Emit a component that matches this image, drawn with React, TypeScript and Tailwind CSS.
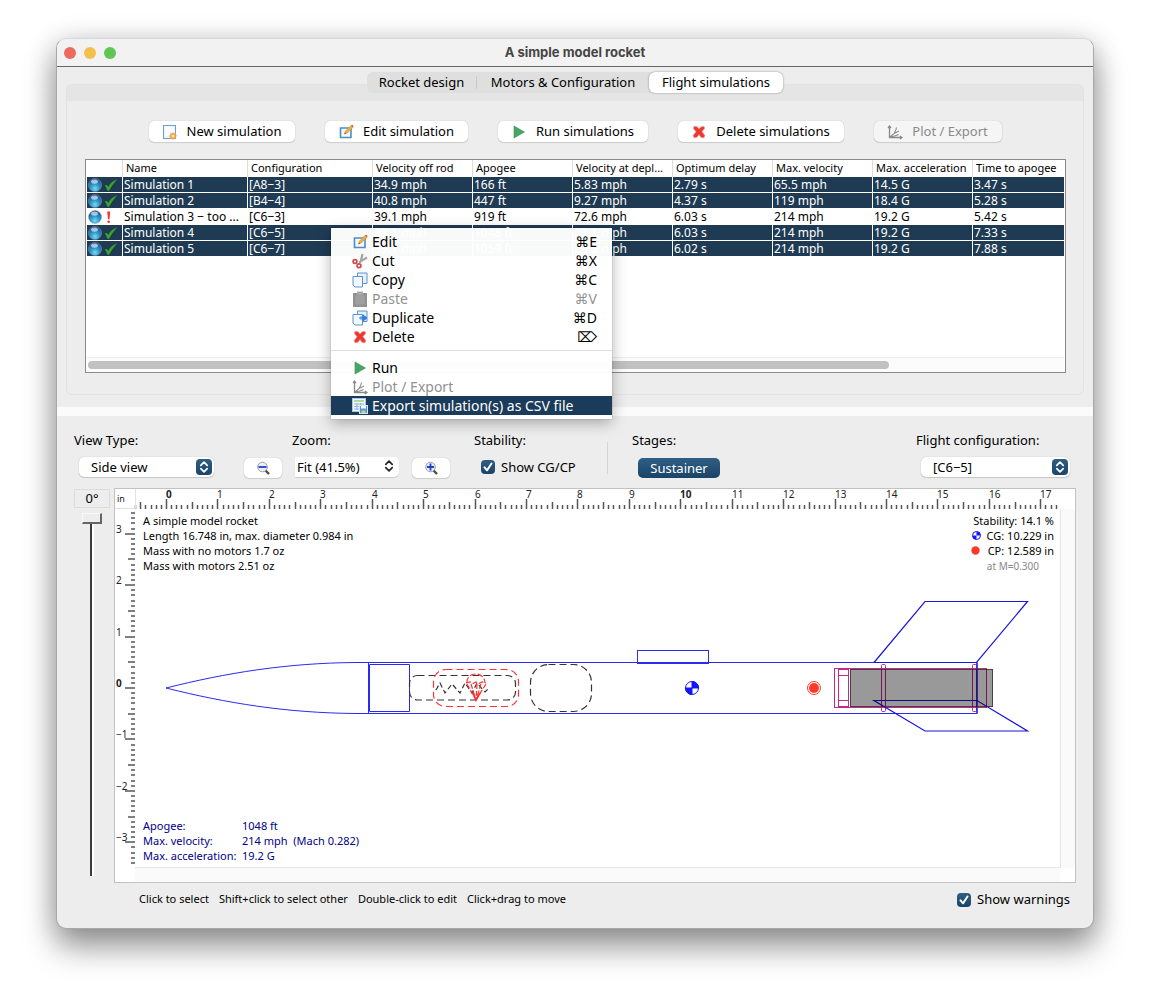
import React from "react";

const PX_PER_INCH = 51.43;

type Simulation = { name: string; ok: boolean; values: string[] };

const columns = [
  "Name",
  "Configuration",
  "Velocity off rod",
  "Apogee",
  "Velocity at depl...",
  "Optimum delay",
  "Max. velocity",
  "Max. acceleration",
  "Time to apogee",
];

const simulations: Simulation[] = [
  { name: "Simulation 1", ok: true, values: ["[A8−3]", "34.9 mph", "166 ft", "5.83 mph", "2.79 s", "65.5 mph", "14.5 G", "3.47 s"] },
  { name: "Simulation 2", ok: true, values: ["[B4−4]", "40.8 mph", "447 ft", "9.27 mph", "4.37 s", "119 mph", "18.4 G", "5.28 s"] },
  { name: "Simulation 3 − too ...", ok: false, values: ["[C6−3]", "39.1 mph", "919 ft", "72.6 mph", "6.03 s", "214 mph", "19.2 G", "5.42 s"] },
  { name: "Simulation 4", ok: true, values: ["[C6−5]", "39.1 mph", "1048 ft", "23.1 mph", "6.03 s", "214 mph", "19.2 G", "7.33 s"] },
  { name: "Simulation 5", ok: true, values: ["[C6−7]", "39.1 mph", "1059 ft", "20.5 mph", "6.02 s", "214 mph", "19.2 G", "7.88 s"] },
];

function NewIcon() {
  return (
    <svg className="h-4 w-4 shrink-0" viewBox="0 0 16 16" aria-hidden="true">
      <rect x="1.5" y="1.5" width="12" height="13" fill="#eef6fd" stroke="#6da0d0" />
      <path d="M3 3h9v9H3z" fill="#fff" opacity="0.7" />
      <path d="M11 8l1 1.6 1.8-.5-.3 1.8 1.7.9-1.5 1.1.5 1.8-1.9-.2L11 16l-1.2-1.5-1.9.3.4-1.9-1.6-1 1.7-1-.3-1.8 1.8.4z" fill="#f0a04a" />
      <circle cx="11" cy="12" r="1.6" fill="#fff0a0" />
    </svg>
  );
}

function EditIcon() {
  return (
    <svg className="h-4 w-4 shrink-0" viewBox="0 0 16 16" aria-hidden="true">
      <path d="M2.500 4h10.500v9.500H2.500z" fill="#f5f9fd" stroke="#4f8cc4" strokeWidth="1.600" />
      <path d="M6.500 10l1-3L13 1.500l2 1.800L9.300 9z" fill="#f0ad3c" stroke="#c98524" strokeWidth="0.5" />
      <path d="M13 1.500l2 1.800.5-1.200-1.300-1.300z" fill="#c9532f" />
      <path d="M6.500 10l.5-1.500 1 1z" fill="#333" />
    </svg>
  );
}

function RunIcon() {
  return (
    <svg className="h-4 w-4 shrink-0" viewBox="0 0 16 16" aria-hidden="true">
      <path d="M3 2l10.500 6L3 14z" fill="#4aa564" stroke="#3b9255" strokeWidth="0.6" />
    </svg>
  );
}

function DeleteIcon() {
  return (
    <svg className="h-4 w-4 shrink-0" viewBox="0 0 16 16" aria-hidden="true">
      <path d="M3.200 2.200l3 .6L8 5l2-2.200 3-.4.600 2L11 7.600l2.800 4-.8 2.200-3-.4L8 10.600l-2 2.600-3 .6-.800-2.200L5 7.800 2.400 4.500z" fill="#e93a32" stroke="#f4908a" strokeWidth="0.8" />
    </svg>
  );
}

function PlotIcon() {
  return (
    <svg className="h-4 w-4 shrink-0" viewBox="0 0 16 16" fill="none" stroke="#8a8a8a" aria-hidden="true">
      <path d="M2.500 2v11.500H15M1 4l1.500-2L4 4M13 12l2 1.500-2 1.500" strokeWidth="1.300" />
      <path d="M3 13C6 11 9 7 9.500 3.500M3 13c3-3 6-5 9-6M3 13c4-.5 6-1 8.500-2.500" strokeWidth="1.100" />
    </svg>
  );
}

function CutIcon() {
  return (
    <svg className="h-4 w-4 shrink-0" viewBox="0 0 16 16" fill="none" aria-hidden="true">
      <path d="M10.500 1L8.600 9M15 4.500L7 9.500" stroke="#a2a2a2" strokeWidth="2.200" />
      <path d="M15 6L9 9" stroke="#d0d0d0" />
      <circle cx="3" cy="8.500" r="1.900" stroke="#d2474a" strokeWidth="1.700" />
      <circle cx="7" cy="12.700" r="1.900" stroke="#d2474a" strokeWidth="1.700" />
    </svg>
  );
}

function CopyIcon({ arrow = false }: { arrow?: boolean }) {
  return (
    <svg className="h-4 w-4 shrink-0" viewBox="0 0 16 16" aria-hidden="true">
      <path d="M5.500 1h9.500v10.500H5.500z" fill="#e4f0fb" stroke="#5b93cb" />
      <path d="M1 4.500h9.500V15H3L1 13z" fill="#f2f8fe" stroke="#5b93cb" />
      {arrow && <path d="M7 8h4M9 6.200V9.800M11 5l4 3-4 3z" fill="#2f7bea" stroke="#2f7bea" />}
    </svg>
  );
}

function PasteIcon() {
  return (
    <svg className="h-4 w-4 shrink-0" viewBox="0 0 16 16" aria-hidden="true">
      <rect x="1" y="2" width="14" height="14" fill="#929292" />
      <rect x="3.500" y="4.500" width="9" height="9" fill="#a0a0a0" />
      <rect x="5" y="0.500" width="6" height="3.500" fill="#a9a9a9" />
    </svg>
  );
}

function CsvIcon() {
  return (
    <svg className="h-4 w-4 shrink-0" viewBox="0 0 16 16" aria-hidden="true">
      <rect x="0.500" y="0.500" width="13" height="13" fill="#f3f8ff" stroke="#a9c6ec" />
      <rect x="2" y="2" width="10" height="2" fill="#b8d98a" />
      <path d="M2 6h10M2 8.500h10M2 11h10M5 5v7M8.500 5v7" stroke="#8fb3e3" />
      <rect x="7.500" y="7.500" width="8" height="8" fill="#5d92de" stroke="#d7e6fa" />
      <rect x="9" y="8" width="5" height="2.500" fill="#fff" />
      <rect x="9.500" y="12.500" width="4" height="2.500" fill="#b8d98a" />
    </svg>
  );
}

function BallIcon() {
  return (
    <svg className="h-[14px] w-[14px] shrink-0" viewBox="0 0 14 14" aria-hidden="true">
      <defs>
        <radialGradient id="ball" cx="0.5" cy="0.78" r="0.75">
          <stop offset="0" stopColor="#6fdcf8" />
          <stop offset="0.5" stopColor="#2f8fc4" />
          <stop offset="1" stopColor="#1a4f86" />
        </radialGradient>
      </defs>
      <circle cx="7" cy="7" r="6.500" fill="url(#ball)" stroke="#7fa9c4" strokeWidth="0.5" />
      <ellipse cx="6.500" cy="3.600" rx="3.400" ry="2.200" fill="#fff" opacity="0.6" />
    </svg>
  );
}

function StateIcon({ ok }: { ok: boolean }) {
  return (
    <svg className="h-[14px] w-[14px] shrink-0" viewBox="0 0 14 14" role="img" aria-label={ok ? "Valid" : "Warning"}>
      {ok ? (
        <path d="M1 7.500c1-.8 2.300-.5 3.200 1.500C6 5.500 9 2.500 13.500 1.200 10 4.500 7.500 8 5 12.800H3.400C2.800 10.500 2 9 1 7.500z" fill="#3fa02b" />
      ) : (
        <path d="M3.200 1.500h3L5.500 9.300H4zM4.700 10.400a1.300 1.300 0 110 2.600 1.300 1.300 0 010-2.600z" fill="#f5362f" />
      )}
    </svg>
  );
}

function Magnifier({ plus }: { plus: boolean }) {
  return (
    <svg className="h-4 w-4" viewBox="0 0 16 16" fill="none" aria-hidden="true">
      <path d="M10.500 10.500l3.500 3.500" stroke="#4a4a4a" strokeWidth="2.400" />
      <circle cx="7.500" cy="7" r="4.800" fill="#e9eefb" stroke="#9aa0ab" />
      <path d={plus ? "M4 7h7M7.500 3.500v7" : "M3.500 7h8"} stroke="#1f3fc4" strokeWidth="1.800" />
    </svg>
  );
}

function UpDown({ className }: { className: string }) {
  return (
    <svg className={className} viewBox="0 0 16 16" fill="none" stroke="currentColor" strokeWidth="1.700" strokeLinecap="round" strokeLinejoin="round" aria-hidden="true">
      <path d="M4.800 6.300L8 3.200l3.200 3.100M4.800 9.700L8 12.800l3.200-3.100" />
    </svg>
  );
}

function ActionButton({ icon, label, disabled = false, className }: { icon: React.ReactNode; label: string; disabled?: boolean; className: string }) {
  return (
    <button
      type="button"
      disabled={disabled}
      className={`flex h-[21px] items-center justify-center gap-[9px] rounded-[5px] bg-white shadow-[0_0_1px_rgba(0,0,0,0.3),0_1px_1px_rgba(0,0,0,0.12)] disabled:bg-[#f5f5f5] disabled:text-[#8a8a8a] ${className}`}
    >
      {icon}
      {label}
    </button>
  );
}

function SimulationTable() {
  return (
    <div className="ml-[18px] mr-[17px] mt-[17px] flex h-[214px] flex-col border border-[#8a8a8a] bg-white px-px">
      <table className="w-full table-fixed border-separate border-spacing-0 text-left">
        <colgroup>
          <col className="w-[36px]" />
          <col className="w-[125px]" />
          <col className="w-[125px]" />
          <col className="w-[100px]" />
          <col className="w-[100px]" />
          <col className="w-[100px]" />
          <col className="w-[100px]" />
          <col className="w-[100px]" />
          <col className="w-[100px]" />
          <col />
        </colgroup>
        <thead>
          <tr className="h-[17px] text-[11px] leading-[15px]">
            <th aria-label="Status" className="border-r border-[#dcdcdc] p-0" />
            {columns.map((title) => (
              <th key={title} className="whitespace-nowrap border-r border-[#dcdcdc] p-0 pl-[3px] align-top font-normal last:border-r-0">
                {title}
              </th>
            ))}
          </tr>
        </thead>
        <tbody className="text-[12px] leading-[15px]">
          {simulations.map((sim) => (
            <tr key={sim.name} className={sim.ok ? "h-4 bg-[#1f3b54] text-white" : "h-4 bg-white text-black"}>
              <td className="border-b border-r border-white p-0">
                <span className="flex h-[15px] items-center gap-[2px] pl-px">
                  <BallIcon />
                  <StateIcon ok={sim.ok} />
                </span>
              </td>
              {[sim.name, ...sim.values].map((value, i) => (
                <td key={i} className="whitespace-nowrap border-b border-r border-white p-0 pl-px last:border-r-0">
                  {value}
                </td>
              ))}
            </tr>
          ))}
        </tbody>
      </table>
      <div className="mt-auto h-[15px] border-t border-[#ececec] bg-[#fcfcfc] pt-[3px]">
        <div className="ml-px h-2 w-[82%] rounded-full bg-[#c1c1c1]" />
      </div>
    </div>
  );
}

type MenuEntry = { icon: React.ReactNode; label: string; keys?: string; state?: "disabled" | "active" };

function MenuItem({ icon, label, keys, state }: MenuEntry) {
  const tone = state === "active" ? "bg-[#1a3b59] text-white" : state === "disabled" ? "text-[#919191]" : "text-black";
  return (
    <li role="none">
      <button type="button" role="menuitem" disabled={state === "disabled"} className={`flex h-[19px] w-full items-center pl-[21px] pr-[15px] text-[14px] leading-[19px] ${tone}`}>
        {icon}
        <span className="ml-1">{label}</span>
        {keys && <span className="ml-auto">{keys}</span>}
      </button>
    </li>
  );
}

function ContextMenu() {
  return (
    <ul role="menu" className="absolute left-[274px] top-[189px] z-10 w-[281px] bg-white/[0.97] pb-1 pt-1 shadow-[0_4px_14px_rgba(0,0,0,0.3),0_0_1px_rgba(0,0,0,0.4)]">
      <MenuItem icon={<EditIcon />} label="Edit" keys="⌘E" />
      <MenuItem icon={<CutIcon />} label="Cut" keys="⌘X" />
      <MenuItem icon={<CopyIcon />} label="Copy" keys="⌘C" />
      <MenuItem icon={<PasteIcon />} label="Paste" keys="⌘V" state="disabled" />
      <MenuItem icon={<CopyIcon arrow />} label="Duplicate" keys="⌘D" />
      <MenuItem icon={<DeleteIcon />} label="Delete" keys="⌦" />
      <li role="separator" className="mb-[7px] mt-1 h-px bg-[#dedede]" />
      <MenuItem icon={<RunIcon />} label="Run" />
      <MenuItem icon={<PlotIcon />} label="Plot / Export" state="disabled" />
      <MenuItem icon={<CsvIcon />} label="Export simulation(s) as CSV file" state="active" />
    </ul>
  );
}

function PopupSelect({ id, value, className }: { id: string; value: string; className: string }) {
  return (
    <div className={`relative ml-[5px] h-5 ${className}`}>
      <select id={id} defaultValue={value} className="h-5 w-full appearance-none rounded-[5px] bg-white pl-3 leading-5 shadow-[0_0_1px_rgba(0,0,0,0.3),0_1px_1px_rgba(0,0,0,0.15)]">
        <option>{value}</option>
      </select>
      <UpDown className="pointer-events-none absolute right-[2px] top-[2px] h-4 w-4 rounded-[4px] bg-gradient-to-b from-[#2f5f85] to-[#1a4468] text-white" />
    </div>
  );
}

function CheckBox({ label }: { label: string }) {
  return (
    <label className="flex items-center gap-[6px]">
      <span className="relative h-[14px] w-[14px]">
        <input type="checkbox" defaultChecked className="block h-[14px] w-[14px] appearance-none rounded-[4px] bg-gradient-to-b from-[#2f5f85] to-[#1a4468]" />
        <svg className="pointer-events-none absolute inset-0 h-[14px] w-[14px]" viewBox="0 0 14 14" fill="none" stroke="#fff" strokeWidth="2" strokeLinecap="round" strokeLinejoin="round" aria-hidden="true">
          <path d="M3.500 7.300l2.600 3L10.500 3.500" />
        </svg>
      </span>
      {label}
    </label>
  );
}

function ViewToolbar() {
  return (
    <div className="flex pl-[17px] pr-[23px] pt-[15px] leading-[18px]">
      <div className="flex flex-col gap-2">
        <label htmlFor="view-type">View Type:</label>
        <PopupSelect id="view-type" value="Side view" className="w-[135px]" />
      </div>
      <div className="ml-[30px] flex flex-col gap-2">
        <label htmlFor="zoom" className="ml-12">
          Zoom:
        </label>
        <div className="flex h-5 gap-[13px]">
          <button type="button" aria-label="Zoom out" className="mt-px flex h-5 w-[38px] items-center justify-center rounded-[5px] bg-white shadow-[0_0_1px_rgba(0,0,0,0.3),0_1px_1px_rgba(0,0,0,0.12)]">
            <Magnifier plus={false} />
          </button>
          <div className="relative h-5 w-[104px]">
            <select id="zoom" defaultValue="Fit (41.5%)" className="h-5 w-full appearance-none rounded-r-[5px] bg-white pl-[2px] leading-5 shadow-[0_1px_1px_rgba(0,0,0,0.15)]">
              <option>Fit (41.5%)</option>
            </select>
            <UpDown className="pointer-events-none absolute right-[2px] top-px h-4 w-4 text-[#222]" />
          </div>
          <button type="button" aria-label="Zoom in" className="mt-px flex h-5 w-[38px] items-center justify-center rounded-[5px] bg-white shadow-[0_0_1px_rgba(0,0,0,0.3),0_1px_1px_rgba(0,0,0,0.12)]">
            <Magnifier plus />
          </button>
        </div>
      </div>
      <div className="ml-6 flex w-[133px] flex-col gap-[9px]">
        <span>Stability:</span>
        <div className="ml-[7px]">
          <CheckBox label="Show CG/CP" />
        </div>
      </div>
      <div className="mt-[11px] h-8 w-px bg-[#d6d6d6]" />
      <div className="ml-6 flex flex-col gap-[9px]">
        <span>Stages:</span>
        <button type="button" aria-pressed="true" className="ml-[6px] h-5 w-[82px] rounded-[5px] bg-gradient-to-b from-[#2f5f85] to-[#1a4468] text-white">
          Sustainer
        </button>
      </div>
      <div className="ml-auto flex flex-col gap-2">
        <label htmlFor="configuration">Flight configuration:</label>
        <PopupSelect id="configuration" value="[C6−5]" className="w-[149px]" />
      </div>
    </div>
  );
}

function range(from: number, to: number) {
  return Array.from({ length: to - from + 1 }, (_, i) => from + i);
}

/* Drawing coordinates: the nose tip is the origin, one inch is PX_PER_INCH. */
function RocketFigure() {
  return (
    <svg className="block h-[393px] w-[960px] max-w-none" viewBox="-51 -199 960 393" fill="none" role="img" aria-label="Side view of the rocket">
      <g stroke="#555" strokeWidth="1.500">
        {range(-6, 173).map((n) => {
          const length = n % 10 === 0 ? 10 : n % 5 === 0 ? 7 : 4;
          return <path key={n} d={`M${Math.round((n * PX_PER_INCH) / 10) + 0.5} ${-179 - length}V-179`} />;
        })}
        {range(-34, 34).map((n) => {
          const length = n % 10 === 0 ? 10 : n % 5 === 0 ? 7 : 4;
          return <path key={n} d={`M${-31 - length} ${Math.round((n * PX_PER_INCH) / 10)}H-31`} />;
        })}
      </g>
      <g fill="#222" className="font-['Noto_Sans',sans-serif] text-[10px]">
        {range(0, 17).map((n) => (
          <text key={n} x={Math.round(n * PX_PER_INCH)} y="-190" fontWeight={n % 10 === 0 ? 700 : 400}>
            {n}
          </text>
        ))}
        {range(-3, 3).map((n) => (
          <text key={n} x="-50" y={Math.round(-n * PX_PER_INCH) - 1} fontWeight={n === 0 ? 700 : 400}>
            {n < 0 ? `−${-n}` : n}
          </text>
        ))}
        <text x="-49" y="-186" className="text-[9px]">
          in
        </text>
      </g>
      <path d="M-30.500 -199V-179.500H-51" stroke="#e2e2e2" />

      <g stroke="#2a2af0">
        <path d="M0 0C60 -15 120 -25 190 -25.500H811V25.500H190C120 25 60 15 0 0z" />
        <path d="M202.500 -25.500V25.500M203.500 -23.500H243.500V23.500H203.500z" />
        <rect x="471.500" y="-37.500" width="71" height="13" />
      </g>
      <g strokeWidth="1.200" strokeDasharray="7 4">
        <rect x="243.500" y="-12.500" width="106" height="24.500" rx="8" stroke="#333" />
        <rect x="267.500" y="-18.500" width="85" height="37" rx="12" stroke="#f33" />
        <rect x="364.500" y="-23.500" width="61" height="47" rx="18" stroke="#333" />
        <path d="M270 2L274 -5L279 5L286 -4L294 5L299 -5L306 5L311 -5L319 4L323 0" stroke="#333" strokeDasharray="5 3" />
      </g>
      <g stroke="#f33" strokeWidth="1.200">
        <path d="M301 -5C300 -17 319 -17 319 -5" strokeDasharray="6 2" />
        <path d="M300 -5l4-1 3 1.500 3-1.500 3 1.500 3-1.500 4 1M301 -4L310 12M305 -4L310 12M311 -4L310 12M315 -4L310 12M320 -4L310 12" strokeDasharray="5 2" />
        <path d="M307 5L310 12L314 5" strokeWidth="1.800" />
      </g>

      <g stroke="#c22a86">
        <rect x="668.500" y="-19.500" width="152" height="39" />
        <rect x="672.500" y="-18.500" width="10" height="37" />
        <path d="M672.500 -12.500H682.500M672.500 12.500H682.500" />
        <rect x="715.500" y="-23.500" width="4" height="47" rx="1" />
        <rect x="806.500" y="-23.500" width="4" height="47" rx="1" />
      </g>
      <g stroke="#1616e0" strokeWidth="1.200">
        <path d="M708 -25.500L759 -86.500H861.500L810.500 -25.500zM708 12.500H811L861.500 43H759z" />
        <path d="M811 -25.500V25.500" />
      </g>
      <rect x="684.500" y="-18.500" width="142" height="37" fill="#000" fillOpacity="0.4" stroke="#222" strokeOpacity="0.8" />

      <g stroke="#1414ff">
        <circle cx="526" cy="0" r="6.500" fill="#fff" />
        <path d="M526 0V-6.500A6.500 6.500 0 01532.500 0zM526 0V6.500A6.500 6.500 0 01519.500 0z" fill="#1414ff" />
      </g>
      <circle cx="648" cy="0" r="5" fill="#ff3a2c" />
      <circle cx="648" cy="0" r="6.500" stroke="#ff3a2c" />
    </svg>
  );
}

function FigurePanel() {
  return (
    <div className="mt-[10px] flex gap-1 px-[17px]">
      <div className="flex w-9 flex-col items-center">
        <output htmlFor="rotation" className="mt-px flex h-[19px] w-full items-center justify-center border border-[#dcdcdc]">
          0°
        </output>
        <input
          id="rotation"
          type="range"
          aria-label="Rotation"
          min={0}
          max={360}
          defaultValue={0}
          className="mt-[5px] h-[363px] w-5 appearance-none bg-[linear-gradient(90deg,transparent_8px,#3c3c3c_8px,#3c3c3c_10px,#ffffff_10px,#ffffff_12px,transparent_12px)] [writing-mode:vertical-lr] [&::-webkit-slider-thumb]:h-[11px] [&::-webkit-slider-thumb]:w-5 [&::-webkit-slider-thumb]:appearance-none [&::-webkit-slider-thumb]:border [&::-webkit-slider-thumb]:border-b-2 [&::-webkit-slider-thumb]:border-r-2 [&::-webkit-slider-thumb]:border-[#666] [&::-webkit-slider-thumb]:border-l-[#f8f8f8] [&::-webkit-slider-thumb]:border-t-[#f8f8f8] [&::-webkit-slider-thumb]:bg-[#ededed]"
        />
      </div>
      <div className="relative h-[395px] flex-1 overflow-hidden border border-[#c2c2c2] bg-white text-[11px] leading-[15px]">
        <RocketFigure />
        <div className="absolute bottom-[14px] right-0 top-5 w-[15px] border-l border-[#e6e6e6] bg-[#fafafa]" />
        <div className="absolute bottom-0 left-5 right-[15px] h-[15px] border-t border-[#e6e6e6] bg-[#fafafa]" />
        <div className="absolute left-7 top-6">
          <p>A simple model rocket</p>
          <p>Length 16.748 in, max. diameter 0.984 in</p>
          <p>Mass with no motors 1.7 oz</p>
          <p>Mass with motors 2.51 oz</p>
        </div>
        <div className="absolute right-[21px] top-6 flex flex-col items-end">
          <p>Stability: 14.1 %</p>
          <p className="flex items-center gap-[6px]">
            <svg className="h-[9px] w-[9px]" viewBox="0 0 9 9" aria-hidden="true">
              <circle cx="4.500" cy="4.500" r="4" fill="#fff" stroke="#1414ff" />
              <path d="M4.500 4.500V.5a4 4 0 014 4zM4.500 4.500v4a4 4 0 01-4-4z" fill="#1414ff" />
            </svg>
            CG: 10.229 in
          </p>
          <p className="flex items-center gap-2">
            <svg className="h-[9px] w-[9px]" viewBox="0 0 9 9" aria-hidden="true">
              <circle cx="4.500" cy="4.500" r="4.200" fill="#ff3a2c" />
            </svg>
            CP: 12.589 in
          </p>
          <p className="mr-[15px] text-[10px] leading-[17px] text-[#888]">at M=0.300</p>
        </div>
        <dl className="absolute bottom-[19px] left-7 grid grid-cols-[99px_auto] text-[#000088]">
          <dt>Apogee:</dt>
          <dd>1048 ft</dd>
          <dt>Max. velocity:</dt>
          <dd className="whitespace-pre">214 mph  (Mach 0.282)</dd>
          <dt>Max. acceleration:</dt>
          <dd>19.2 G</dd>
        </dl>
      </div>
    </div>
  );
}

export default function App() {
  return (
    <main className="min-h-screen bg-white px-14 pb-[74px] pt-[38px] font-['Noto_Sans','DejaVu_Sans',sans-serif] text-[13px] text-black">
      <div className="relative rounded-[10px] border border-[#a8a8a8] border-t-[#d8d8d8] bg-[#ededed] shadow-[0_18px_32px_rgba(0,0,0,0.4),0_2px_28px_rgba(0,0,0,0.16)]">
        <header className="flex h-7 items-center rounded-t-[9px] border-b border-[#666] bg-[#f2f2f2] px-[7px]">
          <div className="flex flex-1 gap-2">
            <button type="button" aria-label="Close" className="h-3 w-3 rounded-full bg-[#ed6a5e]" />
            <button type="button" aria-label="Minimize" className="h-3 w-3 rounded-full bg-[#f5bf4f]" />
            <button type="button" aria-label="Full screen" className="h-3 w-3 rounded-full bg-[#61c554]" />
          </div>
          <h1 className="font-['Inter',sans-serif] font-bold text-[#454545]">A simple model rocket</h1>
          <div className="flex-1" />
        </header>

        <div role="tablist" className="relative z-[1] mx-auto mt-[5px] flex h-[21px] w-[416px] rounded-[6px] bg-[#dfdfdf]">
          <button type="button" role="tab" aria-selected="false" className="w-[109px]">
            Rocket design
          </button>
          <div className="my-1 w-px bg-[#cbcbcb]" />
          <button type="button" role="tab" aria-selected="false" className="flex-1">
            Motors &amp; Configuration
          </button>
          <button type="button" role="tab" aria-selected="true" className="w-[134px] rounded-[6px] bg-white shadow-[0_0_2px_rgba(0,0,0,0.45)]">
            Flight simulations
          </button>
        </div>

        <section className="mx-[9px] -mt-[9px] rounded-[6px] border border-[#e2e2e2] pb-[21px]">
          <div className="h-4 bg-[#e5e5e5]" />
          <div className="flex justify-center gap-[30px] pt-5">
            <ActionButton icon={<NewIcon />} label="New simulation" className="w-[146px]" />
            <ActionButton icon={<EditIcon />} label="Edit simulation" className="w-[143px]" />
            <ActionButton icon={<RunIcon />} label="Run simulations" className="w-[150px]" />
            <ActionButton icon={<DeleteIcon />} label="Delete simulations" className="w-[166px]" />
            <ActionButton icon={<PlotIcon />} label="Plot / Export" disabled className="w-[128px]" />
          </div>
          <SimulationTable />
        </section>

        <div className="mt-3 h-[9px] bg-[#fbfbfb]" />

        <ViewToolbar />
        <FigurePanel />

        <footer className="flex h-[45px] items-center gap-[10px] pb-3 pl-[82px] pr-[23px] text-[11px]">
          <span>Click to select</span>
          <span>Shift+click to select other</span>
          <span>Double-click to edit</span>
          <span>Click+drag to move</span>
          <div className="ml-auto text-[13px]">
            <CheckBox label="Show warnings" />
          </div>
        </footer>
        <ContextMenu />
      </div>
    </main>
  );
}
